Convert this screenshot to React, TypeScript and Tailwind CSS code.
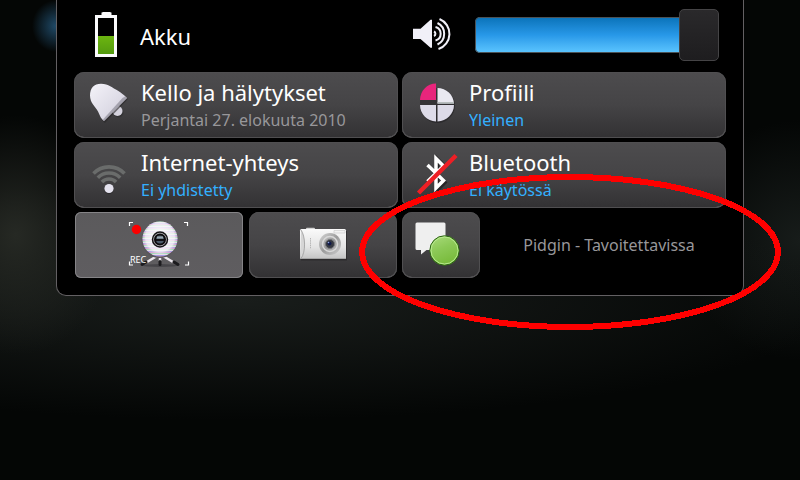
import type { ReactNode } from "react";

const tileSurface =
  "rounded-[10px] bg-linear-to-b from-[#4d4c4e] via-[#454446] to-[#323133] shadow-[inset_0_0_0_1px_#504f51,inset_0_-1px_0_0_#6a696b]";

function BatteryIcon() {
  return (
    <svg className="w-[66px] h-[72px] shrink-0" viewBox="74 0 66 72" aria-hidden="true">
      <defs>
        <linearGradient id="charge" x1="0" y1="0" x2="0" y2="1">
          <stop offset="0" stopColor="#6cb510" />
          <stop offset="1" stopColor="#549a10" />
        </linearGradient>
      </defs>
      <path fill="#fbfbfd" d="M95 15h6.500v-2.500h1v-.5h8v.5h1V15H117v42H95z" />
      <path fill="#000" d="M98 18h16v36H98z" />
      <path fill="url(#charge)" d="M98 36h16v18H98z" />
    </svg>
  );
}

function SpeakerIcon() {
  return (
    <svg className="w-[73px] h-[72px] shrink-0" viewBox="402 0 73 72" aria-hidden="true">
      <path fill="#f1f0f8" d="M413 28.700h7.500l10-9h1.500v28h-1.500l-10-8.700H413z" />
      <g fill="none" stroke="#f1f0f8" strokeWidth="2">
        <path d="M434 31.500a2.500 2.500 0 0 1 0 4.500" />
        <path d="M435.500 27a7 7 0 0 1 0 13.500" />
        <path d="M437.500 23a12 12 0 0 1 0 21.500" />
        <path d="M439.500 19a16 16 0 0 1-1 30" />
      </g>
    </svg>
  );
}

function BellIcon() {
  return (
    <svg className="w-[67px] h-[66px] shrink-0" viewBox="74 72 67 66" aria-hidden="true">
      <defs>
        <linearGradient id="bell" x1="0" y1="0" x2="1" y2="1">
          <stop offset="0" stopColor="#f4f3f9" />
          <stop offset="0.6" stopColor="#dddbe6" />
          <stop offset="1" stopColor="#c4c2ce" />
        </linearGradient>
      </defs>
      <circle cx="118.500" cy="112.500" r="5" fill="#2c2b2d" opacity=".6" />
      <circle cx="117.500" cy="111" r="5" fill="#d5d3de" />
      <path
        fill="#29282a"
        opacity=".6"
        d="M90 97c0-8 4-12.300 11-12.300 8 0 11 4 17 7 3 2 7 4 10 7.300L105 123c-3-2-4-5-6.500-10.500C96 107 90 104 90 97z"
      />
      <path
        fill="url(#bell)"
        d="M90 95.500c0-7.500 4-11.800 11-11.800 8 0 11 4 17 7 3 2 6 4 9 7.300L104 121c-3-2-4-5-6-9.500C95 106 90 103 90 95.500z"
      />
      <path fill="#8f8d98" d="M127 98l-23 23-1-1.500L122.500 98l2.500-1.500z" opacity=".7" />
    </svg>
  );
}

function ProfileIcon() {
  return (
    <svg className="w-[67px] h-[66px] shrink-0" viewBox="402 72 67 66" aria-hidden="true">
      <circle cx="437.500" cy="105.500" r="17.500" fill="#252426" opacity=".65" />
      <path fill="#353436" d="M420 99h17v6h-17z" />
      <path fill="#e9257c" d="M436 83.500V100h-16c0-9 7-16.500 16-16.500z" />
      <path fill="#eae9f1" d="M437.500 88c9 0 16 7 16.500 15.500h-16.500z" />
      <path fill="#b7bdbd" d="M437.500 102H454v1.700h-16.500z" />
      <path fill="#dddbe8" d="M420 105h16v16.500c-9-.5-16-7.500-16-16.500z" />
      <path fill="#dddbe8" d="M437.500 105H454c0 9-7.500 16-16.500 16.500z" />
    </svg>
  );
}

function WifiIcon() {
  return (
    <svg className="w-[67px] h-[66px] shrink-0" viewBox="74 142 67 66" aria-hidden="true">
      <g fill="none" stroke="#6a6c6b" strokeWidth="3.600">
        <path d="M93.500 173.500a21.500 21.500 0 0 1 31 0" />
        <path d="M97.800 177.800a15.600 15.600 0 0 1 22.400 0" />
        <path d="M101.900 182a9.800 9.800 0 0 1 14.200 0" />
      </g>
      <circle cx="109" cy="189.500" r="4.700" fill="#242325" opacity=".6" />
      <circle cx="109" cy="188.500" r="4.600" fill="#e4e2ee" />
    </svg>
  );
}

function BluetoothOffIcon() {
  return (
    <svg className="w-[67px] h-[66px] shrink-0" viewBox="402 142 67 66" aria-hidden="true">
      <path
        d="M428 166l16 15.500-7.500 7.500v-31l7.500 7.500-16 15.500"
        transform="translate(1 1)"
        fill="none"
        stroke="#252426"
        strokeWidth="3.500"
      />
      <path
        d="M427.500 165l16 15.500-7.500 7.500v-29.500l7.500 7.500-16 15.500"
        fill="none"
        stroke="#fff"
        strokeWidth="3.500"
      />
      <path d="M418.500 193L456 155.500" stroke="#ee1f25" strokeWidth="4.500" />
    </svg>
  );
}

function WebcamIcon() {
  return (
    <svg className="size-[66px]" viewBox="126 212 66 66" aria-hidden="true">
      <defs>
        <radialGradient id="ball" cx=".5" cy=".45" r=".55">
          <stop offset="0" stopColor="#ffffff" />
          <stop offset=".75" stopColor="#f6f5f7" stopOpacity=".8" />
          <stop offset="1" stopColor="#b5b1b9" stopOpacity=".1" />
        </radialGradient>
        <pattern id="scan" width="36" height="4" patternUnits="userSpaceOnUse">
          <path fill="#f0e6f0" d="M0 0h36v4H0z" />
          <path fill="#e08fd6" d="M0 0h36v1H0z" />
          <path fill="#8fe0b0" d="M0 1h36v1H0z" />
          <path fill="#9d92ea" d="M0 3h36v1H0z" />
        </pattern>
      </defs>
      <ellipse cx="160" cy="265.500" rx="18" ry="1.500" fill="#37363a" opacity=".6" />
      <path d="M157 256l-10 6M163 256l10 6M160 256v5" stroke="#ebe6ec" strokeWidth="2.500" />
      <path
        d="M146 262l-4 2.500M174 262l4 2.500M160 261.500v3"
        stroke="#1c1b1e"
        strokeWidth="3"
        strokeLinecap="round"
      />
      <circle cx="159.500" cy="240" r="18" fill="#59575c" />
      <circle cx="160" cy="239" r="17.500" fill="url(#scan)" />
      <circle cx="160" cy="239" r="17.500" fill="url(#ball)" />
      <circle cx="160" cy="239.500" r="7.500" fill="#b9b8bd" stroke="#161517" strokeWidth="1.500" />
      <circle cx="160" cy="239.500" r="5" fill="#4b5a68" stroke="#0c0b0d" strokeWidth="2" />
      <path fill="#9aa7b0" d="M157 236.500h6v2h-6z" />
      <path fill="#101013" d="M156 239h8v2h-8z" />
      <path
        d="M129.500 226v-3.500h3.500M184 222.500h3.500v3.500M129.500 261.500v3.500h3.500M185 265h3.500v-3.500"
        fill="none"
        stroke="#fff"
        strokeWidth="1.200"
      />
      <circle cx="136.500" cy="229.500" r="4.700" fill="#fa0000" />
      <text x="130" y="263" fill="#fff" fontSize="9" fontFamily="'Noto Sans', sans-serif">
        REC
      </text>
    </svg>
  );
}

function CameraIcon() {
  return (
    <svg className="size-[66px]" viewBox="290 212 66 66" aria-hidden="true">
      <defs>
        <linearGradient id="body" x1="0" y1="0" x2="0" y2="1">
          <stop offset="0" stopColor="#fafafa" />
          <stop offset=".6" stopColor="#e4e4e4" />
          <stop offset="1" stopColor="#c4c4c4" />
        </linearGradient>
        <linearGradient id="lens" x1="0" y1="0" x2="1" y2="1">
          <stop offset="0" stopColor="#d8d8d8" />
          <stop offset=".5" stopColor="#9b9b9b" />
          <stop offset="1" stopColor="#d0d0d0" />
        </linearGradient>
      </defs>
      <path fill="#242325" opacity=".6" d="M301 231h46v29.500H301z" />
      <rect x="306" y="227.800" width="9" height="3" rx="1" fill="#d4d4d4" />
      <rect x="300" y="229" width="46" height="30" rx="1.500" fill="url(#body)" />
      <path d="M301 230c4.500 6 5 22 0 28.500" fill="#d6d6d6" stroke="#9b9b9b" strokeWidth=".8" />
      <path d="M334 230.500h11v2.500h-11z" fill="#f2f2f2" stroke="#c8c8c8" strokeWidth=".6" />
      <path d="M310.500 238v11" stroke="#b5b5b5" strokeWidth="1" strokeDasharray="1.500 .7" />
      <path d="M300 258.500h46" stroke="#a5a5a5" />
      <circle cx="330" cy="244" r="11" fill="url(#lens)" />
      <circle cx="330" cy="244" r="7.500" fill="none" stroke="#d9d9d9" strokeWidth="1.500" />
      <circle cx="330" cy="244" r="4.500" fill="#363941" stroke="#77787c" />
      <circle cx="329.500" cy="243.500" r="2" fill="#10194a" />
      <circle cx="328.500" cy="242.500" r=".8" fill="#8fa5e0" />
    </svg>
  );
}

function ChatIcon() {
  return (
    <svg className="size-[66px]" viewBox="408 212 66 66" aria-hidden="true">
      <defs>
        <linearGradient id="presence" x1="0" y1="0" x2=".4" y2="1">
          <stop offset="0" stopColor="#aadb7c" />
          <stop offset=".5" stopColor="#8cc957" />
          <stop offset="1" stopColor="#79bb3c" />
        </linearGradient>
      </defs>
      <path
        fill="#efefef"
        d="M417 222.500h27a1.500 1.500 0 0 1 1.500 1.500v24.500a1.500 1.500 0 0 1-1.500 1.500h-17.500l-5.500 4.500V250h-4a1.500 1.500 0 0 1-1.500-1.500V224a1.500 1.500 0 0 1 1.500-1.500z"
      />
      <circle cx="444.500" cy="250.500" r="14.700" fill="url(#presence)" stroke="#2a6212" strokeWidth="1" />
      <circle cx="444.500" cy="250.500" r="13.500" fill="none" stroke="#b9ea90" strokeWidth="1" />
    </svg>
  );
}

type TileProps = {
  icon: ReactNode;
  title: string;
  detail: string;
  muted?: boolean;
};

function StatusTile({ icon, title, detail, muted = false }: TileProps) {
  return (
    <button type="button" className={`flex h-[66px] min-w-0 items-center text-left ${tileSurface}`}>
      {icon}
      <span className="flex min-w-0 flex-col">
        <span className="truncate text-[22px] leading-[30px] text-white">{title}</span>
        <span
          className={`truncate text-[16px] leading-[26px] ${muted ? "text-[#98979a]" : "text-[#33b0ff]"}`}
        >
          {detail}
        </span>
      </span>
    </button>
  );
}

export default function App() {
  return (
    <div className="min-h-screen overflow-hidden bg-[#040605] bg-[radial-gradient(ellipse_24px_26px_at_56px_26px,#1f4a68,transparent),radial-gradient(ellipse_100px_120px_at_16px_235px,#262924,transparent),radial-gradient(ellipse_600px_120px_at_30%_300px,#191d1b,transparent),radial-gradient(ellipse_120px_120px_at_100%_240px,#171c1a,transparent)] px-[56px] font-['Noto_Sans',sans-serif]">
      <main className="relative mx-auto max-w-[688px] rounded-b-[10px] border border-t-0 border-[#636063] bg-black px-[17px] pb-[17px]">
        <div className="grid grid-cols-2 gap-x-1">
          <div className="flex h-[72px] items-center">
            <BatteryIcon />
            <span className="text-[22px] leading-[30px] text-white">Akku</span>
          </div>
          <div className="flex h-[72px] items-center pr-[7px]">
            <SpeakerIcon />
            <input
              type="range"
              aria-label="Äänenvoimakkuus"
              min={0}
              max={100}
              defaultValue={100}
              className="mb-[2px] h-[52px] w-full min-w-0 appearance-none bg-transparent [&::-webkit-slider-runnable-track]:h-[36px] [&::-webkit-slider-runnable-track]:rounded-[5px] [&::-webkit-slider-runnable-track]:bg-linear-to-b [&::-webkit-slider-runnable-track]:from-[#0872b8] [&::-webkit-slider-runnable-track]:via-[#2798e8] [&::-webkit-slider-runnable-track]:to-[#5cc6ff] [&::-webkit-slider-runnable-track]:shadow-[inset_0_0_0_1px_#4c5256] [&::-webkit-slider-thumb]:-mt-2 [&::-webkit-slider-thumb]:h-[52px] [&::-webkit-slider-thumb]:w-[40px] [&::-webkit-slider-thumb]:appearance-none [&::-webkit-slider-thumb]:rounded-[5px] [&::-webkit-slider-thumb]:border [&::-webkit-slider-thumb]:border-[#454446] [&::-webkit-slider-thumb]:bg-linear-to-b [&::-webkit-slider-thumb]:from-[#2a292b] [&::-webkit-slider-thumb]:to-[#1e1d1f]"
            />
          </div>
        </div>

        <div className="grid grid-cols-2 gap-1">
          <StatusTile icon={<BellIcon />} title="Kello ja hälytykset" detail="Perjantai 27. elokuuta 2010" muted />
          <StatusTile icon={<ProfileIcon />} title="Profiili" detail="Yleinen" />
          <StatusTile icon={<WifiIcon />} title="Internet-yhteys" detail="Ei yhdistetty" />
          <StatusTile icon={<BluetoothOffIcon />} title="Bluetooth" detail="Ei käytössä" />

          <div className="flex gap-[6px] px-px">
            <button
              type="button"
              aria-label="Videokamera"
              className="flex h-[66px] w-[168px] items-center justify-center rounded-[6px] bg-linear-to-b from-[#5b5a5c] to-[#5f5d60] shadow-[inset_0_0_0_1px_#858487]"
            >
              <WebcamIcon />
            </button>
            <button
              type="button"
              aria-label="Kamera"
              className={`flex h-[66px] flex-1 items-center justify-center ${tileSurface}`}
            >
              <CameraIcon />
            </button>
          </div>
          <div className="flex items-center">
            <button
              type="button"
              aria-label="Pidgin"
              className={`flex h-[66px] w-[78px] shrink-0 items-center justify-center ${tileSurface}`}
            >
              <ChatIcon />
            </button>
            <span className="flex-1 pl-3 text-center text-[16px] leading-[24px] text-[#98979a]">
              Pidgin - Tavoitettavissa
            </span>
          </div>
        </div>

        <svg
          className="pointer-events-none absolute -right-[38px] -bottom-[35px] h-[156px] w-[422px]"
          viewBox="0 0 422 156"
          shapeRendering="crispEdges"
          aria-hidden="true"
        >
          <ellipse cx="211" cy="78" rx="208" ry="75" fill="none" stroke="#fe0000" strokeWidth="6" />
        </svg>
      </main>
    </div>
  );
}
